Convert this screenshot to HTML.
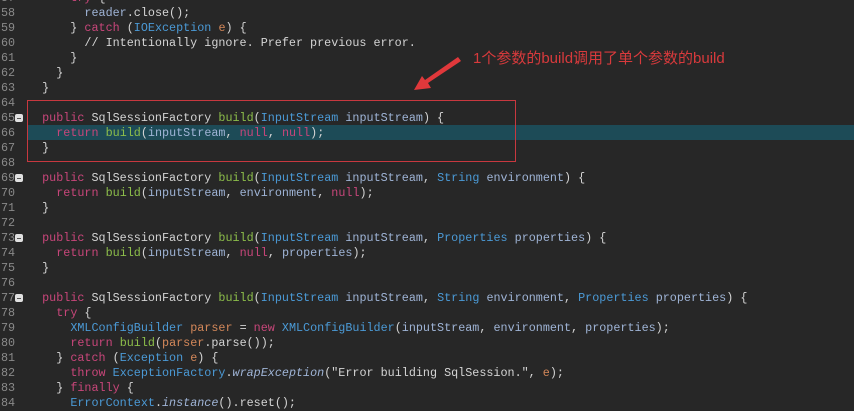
<!DOCTYPE html>
<html><head><meta charset="utf-8"><style>
html,body{margin:0;padding:0;width:854px;height:407px;overflow:hidden;background:#272727;}
.l{position:absolute;left:0;height:15px;line-height:15px;font-family:"Liberation Mono",monospace;font-size:11.75px;color:#d4d4d4;white-space:pre;}
.n{position:absolute;left:1px;color:#8a8a8a;}
.c{position:absolute;left:28px;}
.k{color:#c8467a}
.t{color:#4b9ad6}
.m{color:#8cbd4a}
.v{color:#9fb4d6}
.o{color:#d4885a}
.i{font-style:italic;color:#9fb4d6}
.fold{position:absolute;left:15px;width:8px;height:8px;background:#e0e0e0;border-radius:2px;}
.fold:after{content:"";position:absolute;left:2px;top:3.5px;width:4px;height:1px;background:#555;}
</style></head><body>
<div style="position:absolute;left:27px;top:125px;width:827px;height:15px;background:#1d4b57"></div>
<div class="l" style="top:-9px"><span class="n">57</span><span class="c">      <span class="k">try</span> {</span></div>
<div class="l" style="top:6px"><span class="n">58</span><span class="c">        <span class="v">reader</span>.close();</span></div>
<div class="l" style="top:21px"><span class="n">59</span><span class="c">      } <span class="k">catch</span> (<span class="t">IOException</span> <span class="o">e</span>) {</span></div>
<div class="l" style="top:36px"><span class="n">60</span><span class="c">        // Intentionally ignore. Prefer previous error.</span></div>
<div class="l" style="top:51px"><span class="n">61</span><span class="c">      }</span></div>
<div class="l" style="top:66px"><span class="n">62</span><span class="c">    }</span></div>
<div class="l" style="top:81px"><span class="n">63</span><span class="c">  }</span></div>
<div class="l" style="top:96px"><span class="n">64</span></div>
<div class="l" style="top:111px"><span class="n">65</span><span class="c">  <span class="k">public</span> SqlSessionFactory <span class="m">build</span>(<span class="t">InputStream</span> <span class="v">inputStream</span>) {</span></div>
<div class="l" style="top:126px"><span class="n">66</span><span class="c">    <span class="k">return</span> <span class="m">build</span>(<span class="v">inputStream</span>, <span class="k">null</span>, <span class="k">null</span>);</span></div>
<div class="l" style="top:141px"><span class="n">67</span><span class="c">  }</span></div>
<div class="l" style="top:156px"><span class="n">68</span></div>
<div class="l" style="top:171px"><span class="n">69</span><span class="c">  <span class="k">public</span> SqlSessionFactory <span class="m">build</span>(<span class="t">InputStream</span> <span class="v">inputStream</span>, <span class="t">String</span> <span class="v">environment</span>) {</span></div>
<div class="l" style="top:186px"><span class="n">70</span><span class="c">    <span class="k">return</span> <span class="m">build</span>(<span class="v">inputStream</span>, <span class="v">environment</span>, <span class="k">null</span>);</span></div>
<div class="l" style="top:201px"><span class="n">71</span><span class="c">  }</span></div>
<div class="l" style="top:216px"><span class="n">72</span></div>
<div class="l" style="top:231px"><span class="n">73</span><span class="c">  <span class="k">public</span> SqlSessionFactory <span class="m">build</span>(<span class="t">InputStream</span> <span class="v">inputStream</span>, <span class="t">Properties</span> <span class="v">properties</span>) {</span></div>
<div class="l" style="top:246px"><span class="n">74</span><span class="c">    <span class="k">return</span> <span class="m">build</span>(<span class="v">inputStream</span>, <span class="k">null</span>, <span class="v">properties</span>);</span></div>
<div class="l" style="top:261px"><span class="n">75</span><span class="c">  }</span></div>
<div class="l" style="top:276px"><span class="n">76</span></div>
<div class="l" style="top:291px"><span class="n">77</span><span class="c">  <span class="k">public</span> SqlSessionFactory <span class="m">build</span>(<span class="t">InputStream</span> <span class="v">inputStream</span>, <span class="t">String</span> <span class="v">environment</span>, <span class="t">Properties</span> <span class="v">properties</span>) {</span></div>
<div class="l" style="top:306px"><span class="n">78</span><span class="c">    <span class="k">try</span> {</span></div>
<div class="l" style="top:321px"><span class="n">79</span><span class="c">      <span class="t">XMLConfigBuilder</span> <span class="o">parser</span> = <span class="k">new</span> <span class="t">XMLConfigBuilder</span>(<span class="v">inputStream</span>, <span class="v">environment</span>, <span class="v">properties</span>);</span></div>
<div class="l" style="top:336px"><span class="n">80</span><span class="c">      <span class="k">return</span> <span class="m">build</span>(<span class="o">parser</span>.parse());</span></div>
<div class="l" style="top:351px"><span class="n">81</span><span class="c">    } <span class="k">catch</span> (<span class="t">Exception</span> <span class="o">e</span>) {</span></div>
<div class="l" style="top:366px"><span class="n">82</span><span class="c">      <span class="k">throw</span> <span class="t">ExceptionFactory</span>.<span class="i">wrapException</span>("Error building SqlSession.", <span class="o">e</span>);</span></div>
<div class="l" style="top:381px"><span class="n">83</span><span class="c">    } <span class="k">finally</span> {</span></div>
<div class="l" style="top:396px"><span class="n">84</span><span class="c">      <span class="t">ErrorContext</span>.<span class="i">instance</span>().reset();</span></div>
<div class="fold" style="top:114px"></div>
<div class="fold" style="top:174px"></div>
<div class="fold" style="top:234px"></div>
<div class="fold" style="top:294px"></div>
<div style="position:absolute;left:27px;top:100px;width:487px;height:60px;border:1px solid #c8383f"></div>
<svg style="position:absolute;left:0;top:0" width="854" height="407">
<polygon points="458,57 461,61 428,83 431,88 414,90 422,76 425,80" fill="#e0383b"/>
</svg>
<div style="position:absolute;left:473px;top:47px;font-family:'Liberation Sans','Noto Sans CJK SC',sans-serif;font-size:15px;color:#d83a3c;white-space:nowrap">1个参数的build调用了单个参数的build</div>
</body></html>
